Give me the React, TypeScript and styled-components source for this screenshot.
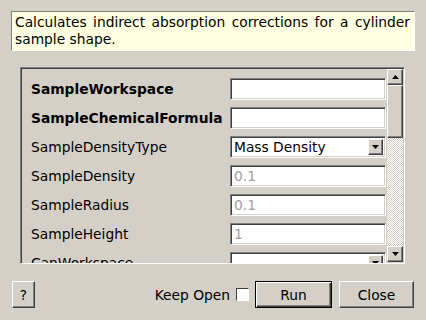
import React from 'react';
import styled, { createGlobalStyle } from 'styled-components';

// -- constants --
const FACE = '#d4d0c8';
const FONT = '"DejaVu Sans", "Noto Sans", sans-serif';

type Field = {
  name: string;
  bold?: boolean;
  kind: 'text' | 'combo';
  value?: string;
  hint?: string;
};

const FIELDS: Field[] = [
  { name: 'SampleWorkspace', bold: true, kind: 'text' },
  { name: 'SampleChemicalFormula', bold: true, kind: 'text' },
  { name: 'SampleDensityType', kind: 'combo', value: 'Mass Density' },
  { name: 'SampleDensity', kind: 'text', hint: '0.1' },
  { name: 'SampleRadius', kind: 'text', hint: '0.1' },
  { name: 'SampleHeight', kind: 'text', hint: '1' },
  { name: 'CanWorkspace', kind: 'combo', value: '' },
];

// -- small parts --
const ArrowGlyph: React.FC<{ up?: boolean }> = ({ up }) => (
  <svg width="7" height="4" viewBox="0 0 7 4">
    <path d={up ? 'M3.5 0 L7 4 L0 4 Z' : 'M0 0 L7 0 L3.5 4 Z'} fill="#000" />
  </svg>
);

// -- main component --
const App: React.FC = () => {
  return (
    <>
      <GlobalStyle />
      <DialogWindow>
        <Description>
          Calculates indirect absorption corrections for a cylinder sample shape.
        </Description>

        <ScrollFrame>
          <Viewport>
            <PropertyGrid>
              {FIELDS.map((f) => (
                <React.Fragment key={f.name}>
                  <PropLabel bold={f.bold}>{f.name}</PropLabel>
                  {f.kind === 'combo' ? (
                    <ComboBox>
                      <ComboText>{f.value}</ComboText>
                      <ComboButton>
                        <ArrowGlyph />
                      </ComboButton>
                    </ComboBox>
                  ) : (
                    <LineEdit>{f.hint && <HintText>{f.hint}</HintText>}</LineEdit>
                  )}
                </React.Fragment>
              ))}
            </PropertyGrid>
          </Viewport>
          <ScrollBar>
            <ScrollButton>
              <ArrowGlyph up />
            </ScrollButton>
            <ScrollThumb />
            <ScrollTrack />
            <ScrollButton>
              <ArrowGlyph />
            </ScrollButton>
          </ScrollBar>
        </ScrollFrame>

        <Footer>
          <PushButton width={23}>?</PushButton>
          <Spacer />
          <KeepOpenText>Keep Open</KeepOpenText>
          <CheckBox />
          <PushButton width={77} isDefault>
            Run
          </PushButton>
          <PushButton width={75}>Close</PushButton>
        </Footer>
      </DialogWindow>
    </>
  );
};

// -- styled components --

const GlobalStyle = createGlobalStyle`
  html, body {
    margin: 0;
    padding: 0;
    background: ${FACE};
  }
  * {
    box-sizing: border-box;
  }
`;

const DialogWindow = styled.div`
  width: 426px;
  height: 320px;
  background: ${FACE};
  font-family: ${FONT};
  font-size: 13.8px;
  color: #000;
  padding-top: 11px;
  display: flex;
  flex-direction: column;
  overflow: hidden;
`;

const Description = styled.div`
  margin: 0 11px;
  height: 40px;
  padding: 2px 4px 0 3px;
  background: #ffffe1;
  border: 1px solid;
  border-color: #808080 #ffffff #ffffff #808080;
  line-height: 17px;
  text-align: justify;
`;

const ScrollFrame = styled.div`
  margin: 16px 0 0 20px;
  width: 385px;
  height: 197px;
  display: flex;
  border: 1px solid;
  border-color: #808080 #ffffff #ffffff #808080;
  box-shadow: inset 1px 1px #404040;
  padding: 1px 1px 0 1px;
`;

const Viewport = styled.div`
  flex: 1;
  overflow: hidden;
`;

const PropertyGrid = styled.div`
  display: grid;
  grid-template-columns: 199px 156px;
  grid-auto-rows: 22px;
  row-gap: 7px;
  padding: 9px 0 0 9px;
`;

const PropLabel = styled.div<{ bold?: boolean }>`
  display: flex;
  align-items: center;
  font-weight: ${(p) => (p.bold ? 'bold' : 'normal')};
  white-space: nowrap;
`;

const sunken = `
  border: 1px solid;
  border-color: #808080 #ffffff #ffffff #808080;
  box-shadow: inset 1px 1px #404040, inset -1px -1px ${FACE};
`;

const raised = `
  border: 1px solid;
  border-color: #ffffff #404040 #404040 #ffffff;
  box-shadow: inset -1px -1px #808080;
  background: ${FACE};
`;

const LineEdit = styled.div`
  ${sunken}
  background: #fff;
  display: flex;
  align-items: center;
  padding: 0 3px;
`;

const HintText = styled.span`
  color: #a0a0a0;
`;

const ComboBox = styled.div`
  ${sunken}
  background: #fff;
  display: flex;
  align-items: stretch;
  padding: 2px;
`;

const ComboText = styled.div`
  flex: 1;
  display: flex;
  align-items: center;
  padding-left: 1px;
  white-space: nowrap;
`;

const ComboButton = styled.div`
  ${raised}
  width: 15px;
  display: flex;
  align-items: center;
  justify-content: center;
`;

const ScrollBar = styled.div`
  width: 16px;
  margin-bottom: 1px;
  display: flex;
  flex-direction: column;
`;

const ScrollButton = styled.div`
  ${raised}
  height: 16px;
  display: flex;
  align-items: center;
  justify-content: center;
`;

const ScrollThumb = styled.div`
  ${raised}
  height: 53px;
`;

const ScrollTrack = styled.div`
  flex: 1;
  background: repeating-conic-gradient(${FACE} 0 25%, #ffffff 0 50%) 0 0 / 2px 2px;
`;

const Footer = styled.div`
  margin-top: 17px;
  padding: 0 12px 0 12px;
  display: flex;
  align-items: center;
  height: 27px;
`;

const Spacer = styled.div`
  flex: 1;
`;

const PushButton = styled.div<{ width: number; isDefault?: boolean }>`
  ${raised}
  width: ${(p) => p.width}px;
  height: 27px;
  display: flex;
  align-items: center;
  justify-content: center;
  margin-left: ${(p) => (p.isDefault ? '6px' : '7px')};
  ${(p) =>
    p.isDefault &&
    `
    border: 1px solid #000;
    box-shadow: inset 1px 1px #fff, inset -1px -1px #404040, inset -2px -2px #808080;
  `}
  &:first-child {
    margin-left: 0;
  }
`;

const KeepOpenText = styled.span`
  margin-right: 6px;
`;

const CheckBox = styled.div`
  width: 13px;
  height: 13px;
  background: #fff;
  border: 1px solid;
  border-color: #404040 #ffffff #ffffff #404040;
`;

// -- finally export part --

export default App;
